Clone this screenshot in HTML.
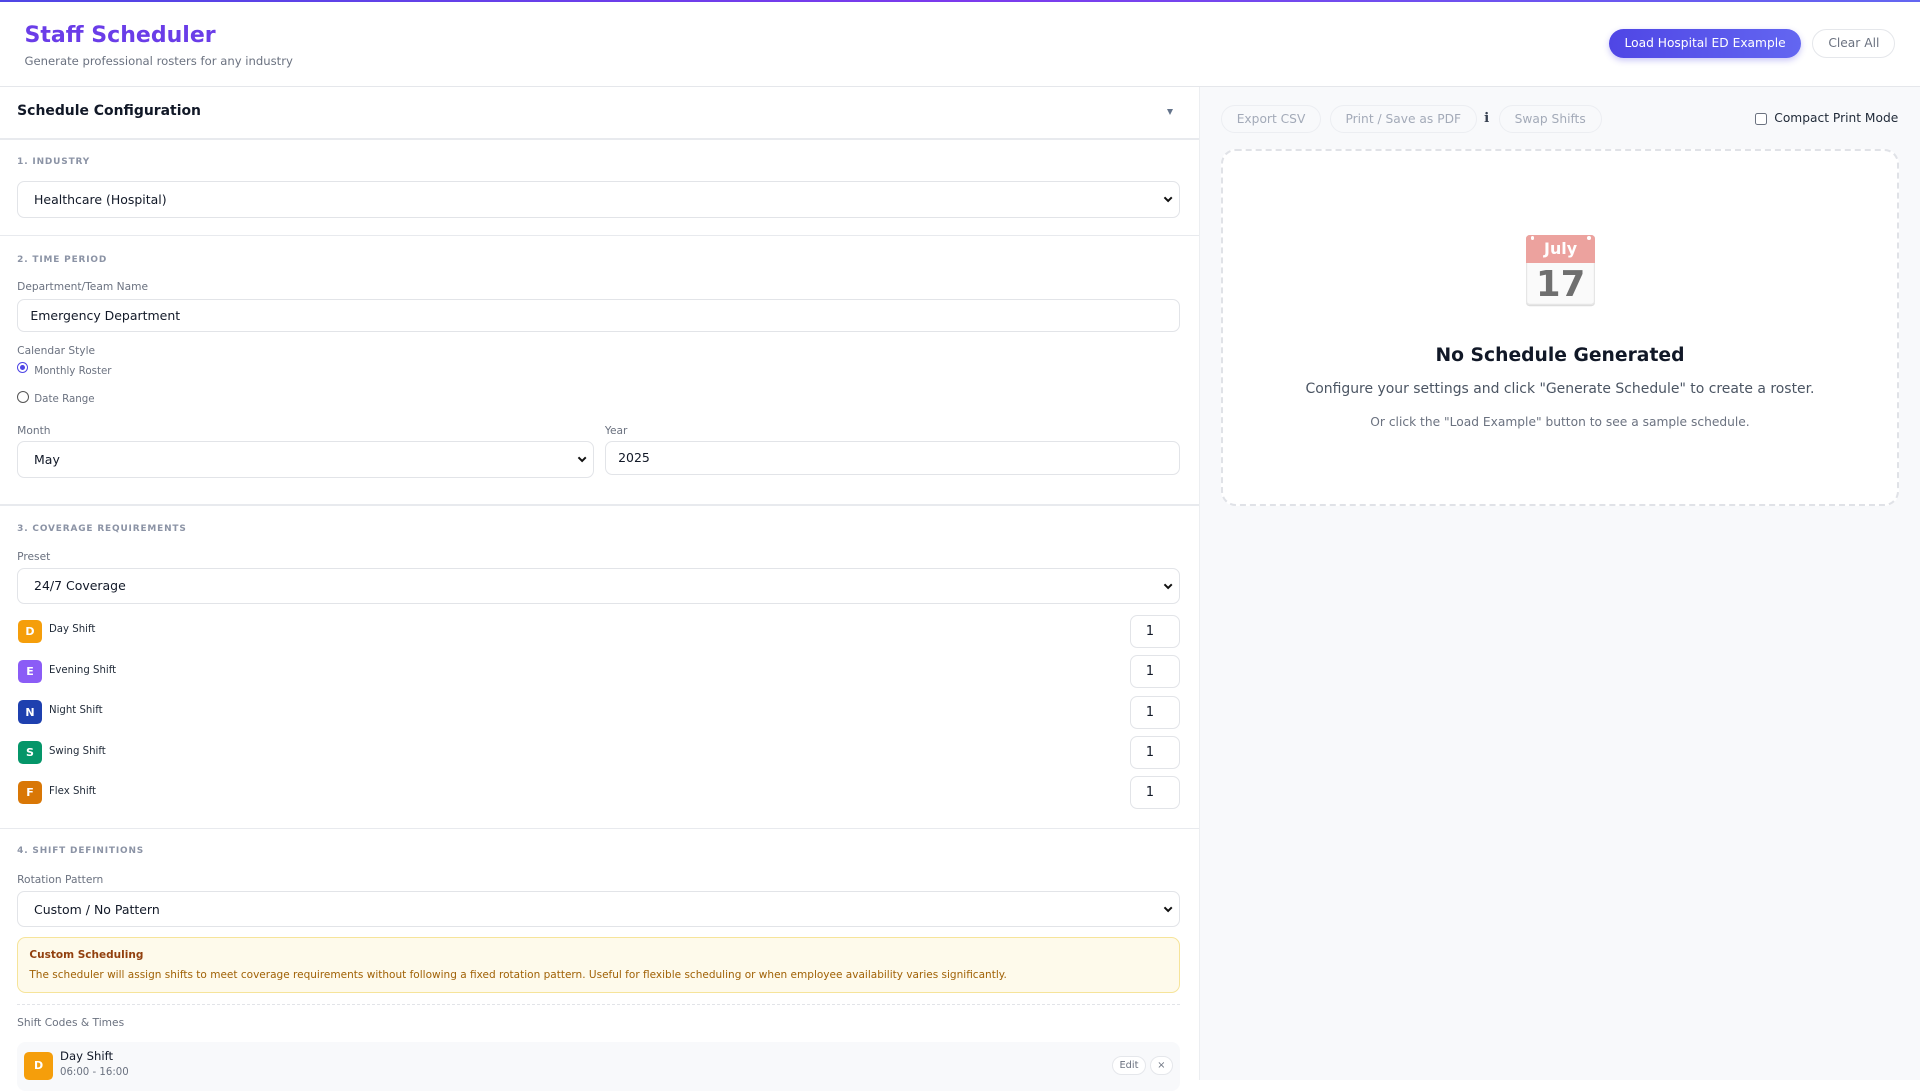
<!DOCTYPE html>
<html><head><meta charset="utf-8">
<style>
html,body{margin:0;padding:0;}
body{width:1568px;height:882px;zoom:1.22449;overflow:hidden;font-family:"DejaVu Sans","Liberation Sans",sans-serif;background:#fff;position:relative;color:#111827;}
.a{position:absolute;}
.bar{left:0;top:0;width:1568px;height:2px;background:linear-gradient(90deg,#4f46e5,#7c3aed,#6366f1);}
.hdr{left:0;top:2px;width:1568px;height:68px;border-bottom:1px solid #e5e7eb;background:#fff;}
.left{left:0;top:71px;width:979px;height:811px;background:#fff;}
.right{left:979px;top:71px;width:589px;height:811px;background:#f8f9fb;}
.sec{font-size:7.3px;font-weight:bold;letter-spacing:.7px;color:#8b93a5;}
.lbl{font-size:8.7px;color:#6b7280;}
.inp{border:1px solid #e2e4e8;border-radius:6px;background:#fff;box-sizing:border-box;font-size:10.2px;color:#111827;padding-left:13px;display:flex;align-items:center;}
.inp .chev{position:absolute;right:4px;top:50%;margin-top:-5px;width:10px;height:10px;}
.hr{left:0;width:979px;height:1px;background:#e8eaee;}
.badge{width:19px;height:19px;border-radius:4px;color:#fff;font-size:9px;font-weight:bold;display:flex;align-items:center;justify-content:center;}
.sn{font-size:8.3px;color:#1f2937;}
.num{width:41px;height:27px;border:1px solid #e2e4e8;border-radius:6px;box-sizing:border-box;font-size:10.5px;padding-left:12px;display:flex;align-items:center;background:#fff;}
.pill{height:23px;border:1px solid #eceef2;border-radius:12px;box-sizing:border-box;font-size:10px;color:#a3aab8;display:flex;align-items:center;justify-content:center;background:#f8f9fb;}
</style></head><body>
<div class="a bar"></div>
<div class="a hdr"></div>
<div class="a" style="left:20px;top:19px;font-size:18px;font-weight:bold;color:#6a3de8;">Staff Scheduler</div>
<div class="a" style="left:20px;top:44px;font-size:9.5px;color:#6b7280;">Generate professional rosters for any industry</div>
<div class="a" style="left:1314px;top:24px;width:157px;height:23px;border-radius:12px;background:linear-gradient(90deg,#4f46e5,#6366f1);color:#fff;font-size:10px;display:flex;align-items:center;justify-content:center;box-shadow:0 2px 5px rgba(79,70,229,.3);">Load Hospital ED Example</div>
<div class="a" style="left:1480px;top:24px;width:68px;height:23px;border-radius:12px;border:1px solid #e5e7eb;box-sizing:border-box;color:#6b7280;font-size:10px;display:flex;align-items:center;justify-content:center;">Clear All</div>

<div class="a left"></div>
<div class="a right"></div>
<div class="a" style="left:979px;top:71px;width:1px;height:811px;background:#eceef1;"></div>

<div class="a" style="left:14px;top:84px;font-size:11.4px;font-weight:bold;color:#111827;">Schedule Configuration</div>
<div class="a" style="left:953px;top:89px;width:0;height:0;border-left:3px solid transparent;border-right:3px solid transparent;border-top:5px solid #64748b;"></div>
<div class="a hr" style="top:113px;"></div>

<div class="a sec" style="left:14px;top:128px;">1. INDUSTRY</div>
<div class="a inp" style="left:14px;top:148px;width:950px;height:30px;">Healthcare (Hospital)<svg class="chev" viewBox="0 0 10 10"><path d="M2 3.5 L5 6.5 L8 3.5" stroke="#111" stroke-width="1.6" fill="none"/></svg></div>
<div class="a hr" style="top:192px;"></div>

<div class="a sec" style="left:14px;top:208px;">2. TIME PERIOD</div>
<div class="a lbl" style="left:14px;top:229px;">Department/Team Name</div>
<div class="a inp" style="left:14px;top:244px;width:950px;height:27px;padding-left:10px;">Emergency Department</div>
<div class="a lbl" style="left:14px;top:281px;">Calendar Style</div>
<div class="a" style="left:14px;top:296px;width:9px;height:9px;border-radius:50%;border:1px solid #4f46e5;box-sizing:border-box;background:#fff;"><div style="position:absolute;left:1.5px;top:1.5px;width:4px;height:4px;border-radius:50%;background:#4f46e5;"></div></div>
<div class="a" style="left:28px;top:298px;font-size:8.4px;color:#6b7280;">Monthly Roster</div>
<div class="a" style="left:14px;top:319px;width:10px;height:10px;border-radius:50%;border:1px solid #555;box-sizing:border-box;"></div>
<div class="a" style="left:28px;top:321px;font-size:8.4px;color:#6b7280;">Date Range</div>
<div class="a lbl" style="left:14px;top:346px;">Month</div>
<div class="a lbl" style="left:494px;top:346px;">Year</div>
<div class="a inp" style="left:14px;top:360px;width:471px;height:30px;">May<svg class="chev" viewBox="0 0 10 10"><path d="M2 3.5 L5 6.5 L8 3.5" stroke="#111" stroke-width="1.6" fill="none"/></svg></div>
<div class="a inp" style="left:494px;top:360px;width:470px;height:28px;padding-left:10px;">2025</div>
<div class="a hr" style="top:412px;"></div>

<div class="a sec" style="left:14px;top:428px;">3. COVERAGE REQUIREMENTS</div>
<div class="a lbl" style="left:14px;top:449px;">Preset</div>
<div class="a inp" style="left:14px;top:464px;width:950px;height:29px;">24/7 Coverage<svg class="chev" viewBox="0 0 10 10"><path d="M2 3.5 L5 6.5 L8 3.5" stroke="#111" stroke-width="1.6" fill="none"/></svg></div>

<div class="a badge" style="left:15px;top:506px;background:#f59e0b;">D</div><div class="a sn" style="left:40px;top:510px;">Day Shift</div><div class="a num" style="left:923px;top:502px;">1</div>
<div class="a badge" style="left:15px;top:539px;background:#8b5cf6;">E</div><div class="a sn" style="left:40px;top:543px;">Evening Shift</div><div class="a num" style="left:923px;top:535px;">1</div>
<div class="a badge" style="left:15px;top:572px;background:#1e40af;">N</div><div class="a sn" style="left:40px;top:576px;">Night Shift</div><div class="a num" style="left:923px;top:568px;">1</div>
<div class="a badge" style="left:15px;top:605px;background:#059669;">S</div><div class="a sn" style="left:40px;top:609px;">Swing Shift</div><div class="a num" style="left:923px;top:601px;">1</div>
<div class="a badge" style="left:15px;top:638px;background:#d97706;">F</div><div class="a sn" style="left:40px;top:642px;">Flex Shift</div><div class="a num" style="left:923px;top:634px;">1</div>
<div class="a hr" style="top:676px;"></div>

<div class="a sec" style="left:14px;top:691px;">4. SHIFT DEFINITIONS</div>
<div class="a lbl" style="left:14px;top:713px;">Rotation Pattern</div>
<div class="a inp" style="left:14px;top:728px;width:950px;height:29px;">Custom / No Pattern<svg class="chev" viewBox="0 0 10 10"><path d="M2 3.5 L5 6.5 L8 3.5" stroke="#111" stroke-width="1.6" fill="none"/></svg></div>
<div class="a" style="left:14px;top:765px;width:950px;height:46px;border:1px solid #f6e49a;border-radius:7px;background:#fefaeb;box-sizing:border-box;"></div>
<div class="a" style="left:24px;top:775px;font-size:8.6px;font-weight:bold;color:#92400e;">Custom Scheduling</div>
<div class="a" style="left:24px;top:791px;font-size:8.6px;color:#a16207;">The scheduler will assign shifts to meet coverage requirements without following a fixed rotation pattern. Useful for flexible scheduling or when employee availability varies significantly.</div>
<div class="a" style="left:14px;top:820px;width:950px;height:0;border-top:1px dashed #e2e4e8;"></div>
<div class="a lbl" style="left:14px;top:830px;">Shift Codes &amp; Times</div>
<div class="a" style="left:14px;top:851px;width:950px;height:40px;border-radius:7px;background:#f8f9fb;"></div>
<div class="a badge" style="left:20px;top:859px;width:23px;height:23px;background:#f59e0b;">D</div>
<div class="a" style="left:49px;top:857px;font-size:9.5px;color:#111827;">Day Shift</div>
<div class="a" style="left:49px;top:871px;font-size:8.3px;color:#6b7280;">06:00 - 16:00</div>
<div class="a" style="left:908px;top:862px;width:28px;height:16px;border:1px solid #e5e7eb;border-radius:8px;box-sizing:border-box;background:#fff;font-size:8px;color:#6b7280;display:flex;align-items:center;justify-content:center;">Edit</div>
<div class="a" style="left:939px;top:862px;width:19px;height:16px;border:1px solid #e5e7eb;border-radius:8px;box-sizing:border-box;background:#fff;font-size:8px;color:#6b7280;display:flex;align-items:center;justify-content:center;">×</div>

<div class="a pill" style="left:997px;top:86px;width:82px;">Export CSV</div>
<div class="a pill" style="left:1086px;top:86px;width:120px;">Print / Save as PDF</div>
<div class="a" style="left:1212px;top:91px;font-size:11px;font-weight:bold;color:#374151;">ℹ</div>
<div class="a pill" style="left:1224px;top:86px;width:84px;">Swap Shifts</div>
<div class="a" style="left:1433px;top:92px;width:10px;height:10px;border:1px solid #6b7280;border-radius:2px;box-sizing:border-box;background:#fff;"></div>
<div class="a" style="left:1449px;top:91px;font-size:10px;color:#1f2937;">Compact Print Mode</div>

<div class="a" style="left:997px;top:122px;width:554px;height:291px;border:2px dashed #e0e2e7;border-radius:12px;box-sizing:border-box;background:#fff;"></div>
<div class="a" style="left:1246px;top:192px;width:57px;height:57px;border-radius:3px;background:#fafafa;box-shadow:0 1px 0 #ddd, inset 0 0 0 1px #e6e6e6;overflow:hidden;">
 <div style="position:absolute;left:0;top:0;width:57px;height:23px;background:#eca29e;"></div>
 <div style="position:absolute;left:4px;top:1px;width:3px;height:3px;border-radius:50%;background:#fff;"></div>
 <div style="position:absolute;left:50px;top:1px;width:3px;height:3px;border-radius:50%;background:#fff;"></div>
 <div style="position:absolute;left:0;top:3px;width:57px;text-align:center;font-size:13px;font-weight:bold;color:#fff;">July</div>
 <div style="position:absolute;left:0;top:24px;width:57px;text-align:center;font-size:29px;font-weight:bold;color:#6f6f6f;">17</div>
</div>
<div class="a" style="left:997px;top:282px;width:554px;text-align:center;font-size:15.3px;font-weight:bold;color:#111827;">No Schedule Generated</div>
<div class="a" style="left:997px;top:311px;width:554px;text-align:center;font-size:11.4px;color:#4b5563;">Configure your settings and click "Generate Schedule" to create a roster.</div>
<div class="a" style="left:997px;top:339px;width:554px;text-align:center;font-size:10px;color:#6b7280;">Or click the "Load Example" button to see a sample schedule.</div>
</body></html>
